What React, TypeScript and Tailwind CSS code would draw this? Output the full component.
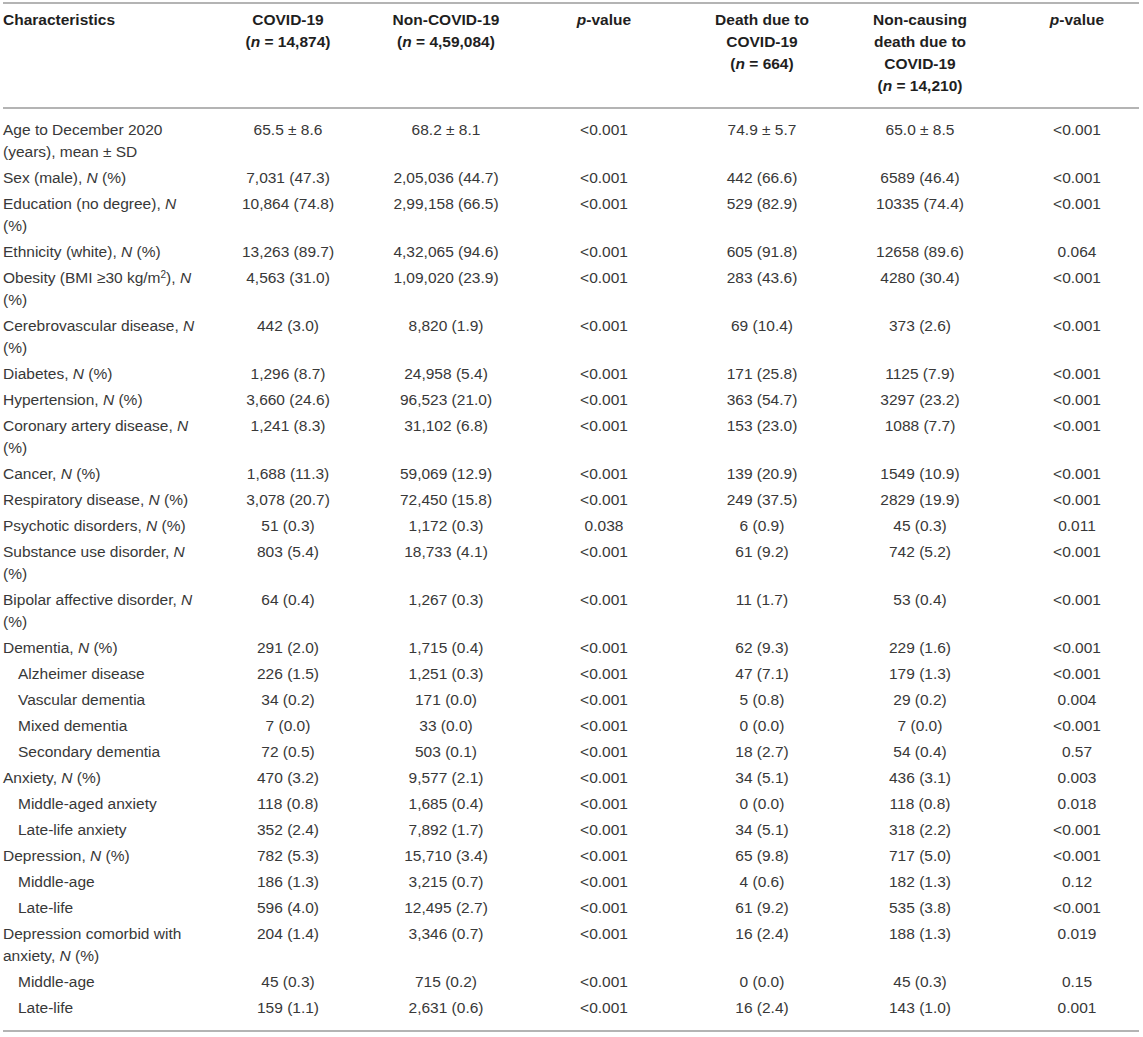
import type { ReactNode } from 'react';

const N = () => <i>N</i>;

type Row = {
  label: ReactNode;
  sub?: boolean;
  values: string[];
};

const ROWS: Row[] = [
  {
    label: (
      <>
        Age to December 2020
        <br />
        (years), mean ± SD
      </>
    ),
    values: ['65.5 ± 8.6', '68.2 ± 8.1', '<0.001', '74.9 ± 5.7', '65.0 ± 8.5', '<0.001'],
  },
  {
    label: (
      <>
        Sex (male), <N /> (%)
      </>
    ),
    values: ['7,031 (47.3)', '2,05,036 (44.7)', '<0.001', '442 (66.6)', '6589 (46.4)', '<0.001'],
  },
  {
    label: (
      <>
        Education (no degree), <N />
        <br />
        (%)
      </>
    ),
    values: ['10,864 (74.8)', '2,99,158 (66.5)', '<0.001', '529 (82.9)', '10335 (74.4)', '<0.001'],
  },
  {
    label: (
      <>
        Ethnicity (white), <N /> (%)
      </>
    ),
    values: ['13,263 (89.7)', '4,32,065 (94.6)', '<0.001', '605 (91.8)', '12658 (89.6)', '0.064'],
  },
  {
    label: (
      <>
        Obesity (BMI ≥30 kg/m<sup className="text-[10px]">2</sup>), <N />
        <br />
        (%)
      </>
    ),
    values: ['4,563 (31.0)', '1,09,020 (23.9)', '<0.001', '283 (43.6)', '4280 (30.4)', '<0.001'],
  },
  {
    label: (
      <>
        Cerebrovascular disease, <N />
        <br />
        (%)
      </>
    ),
    values: ['442 (3.0)', '8,820 (1.9)', '<0.001', '69 (10.4)', '373 (2.6)', '<0.001'],
  },
  {
    label: (
      <>
        Diabetes, <N /> (%)
      </>
    ),
    values: ['1,296 (8.7)', '24,958 (5.4)', '<0.001', '171 (25.8)', '1125 (7.9)', '<0.001'],
  },
  {
    label: (
      <>
        Hypertension, <N /> (%)
      </>
    ),
    values: ['3,660 (24.6)', '96,523 (21.0)', '<0.001', '363 (54.7)', '3297 (23.2)', '<0.001'],
  },
  {
    label: (
      <>
        Coronary artery disease, <N />
        <br />
        (%)
      </>
    ),
    values: ['1,241 (8.3)', '31,102 (6.8)', '<0.001', '153 (23.0)', '1088 (7.7)', '<0.001'],
  },
  {
    label: (
      <>
        Cancer, <N /> (%)
      </>
    ),
    values: ['1,688 (11.3)', '59,069 (12.9)', '<0.001', '139 (20.9)', '1549 (10.9)', '<0.001'],
  },
  {
    label: (
      <>
        Respiratory disease, <N /> (%)
      </>
    ),
    values: ['3,078 (20.7)', '72,450 (15.8)', '<0.001', '249 (37.5)', '2829 (19.9)', '<0.001'],
  },
  {
    label: (
      <>
        Psychotic disorders, <N /> (%)
      </>
    ),
    values: ['51 (0.3)', '1,172 (0.3)', '0.038', '6 (0.9)', '45 (0.3)', '0.011'],
  },
  {
    label: (
      <>
        Substance use disorder, <N />
        <br />
        (%)
      </>
    ),
    values: ['803 (5.4)', '18,733 (4.1)', '<0.001', '61 (9.2)', '742 (5.2)', '<0.001'],
  },
  {
    label: (
      <>
        Bipolar affective disorder, <N />
        <br />
        (%)
      </>
    ),
    values: ['64 (0.4)', '1,267 (0.3)', '<0.001', '11 (1.7)', '53 (0.4)', '<0.001'],
  },
  {
    label: (
      <>
        Dementia, <N /> (%)
      </>
    ),
    values: ['291 (2.0)', '1,715 (0.4)', '<0.001', '62 (9.3)', '229 (1.6)', '<0.001'],
  },
  { label: 'Alzheimer disease', sub: true, values: ['226 (1.5)', '1,251 (0.3)', '<0.001', '47 (7.1)', '179 (1.3)', '<0.001'] },
  { label: 'Vascular dementia', sub: true, values: ['34 (0.2)', '171 (0.0)', '<0.001', '5 (0.8)', '29 (0.2)', '0.004'] },
  { label: 'Mixed dementia', sub: true, values: ['7 (0.0)', '33 (0.0)', '<0.001', '0 (0.0)', '7 (0.0)', '<0.001'] },
  { label: 'Secondary dementia', sub: true, values: ['72 (0.5)', '503 (0.1)', '<0.001', '18 (2.7)', '54 (0.4)', '0.57'] },
  {
    label: (
      <>
        Anxiety, <N /> (%)
      </>
    ),
    values: ['470 (3.2)', '9,577 (2.1)', '<0.001', '34 (5.1)', '436 (3.1)', '0.003'],
  },
  { label: 'Middle-aged anxiety', sub: true, values: ['118 (0.8)', '1,685 (0.4)', '<0.001', '0 (0.0)', '118 (0.8)', '0.018'] },
  { label: 'Late-life anxiety', sub: true, values: ['352 (2.4)', '7,892 (1.7)', '<0.001', '34 (5.1)', '318 (2.2)', '<0.001'] },
  {
    label: (
      <>
        Depression, <N /> (%)
      </>
    ),
    values: ['782 (5.3)', '15,710 (3.4)', '<0.001', '65 (9.8)', '717 (5.0)', '<0.001'],
  },
  { label: 'Middle-age', sub: true, values: ['186 (1.3)', '3,215 (0.7)', '<0.001', '4 (0.6)', '182 (1.3)', '0.12'] },
  { label: 'Late-life', sub: true, values: ['596 (4.0)', '12,495 (2.7)', '<0.001', '61 (9.2)', '535 (3.8)', '<0.001'] },
  {
    label: (
      <>
        Depression comorbid with
        <br />
        anxiety, <N /> (%)
      </>
    ),
    values: ['204 (1.4)', '3,346 (0.7)', '<0.001', '16 (2.4)', '188 (1.3)', '0.019'],
  },
  { label: 'Middle-age', sub: true, values: ['45 (0.3)', '715 (0.2)', '<0.001', '0 (0.0)', '45 (0.3)', '0.15'] },
  { label: 'Late-life', sub: true, values: ['159 (1.1)', '2,631 (0.6)', '<0.001', '16 (2.4)', '143 (1.0)', '0.001'] },
];

const HEADERS: ReactNode[] = [
  <>
    COVID-19
    <br />(<i>n</i> = 14,874)
  </>,
  <>
    Non-COVID-19
    <br />(<i>n</i> = 4,59,084)
  </>,
  <>
    <i>p</i>-value
  </>,
  <>
    Death due to
    <br />
    COVID-19
    <br />(<i>n</i> = 664)
  </>,
  <>
    Non-causing
    <br />
    death due to
    <br />
    COVID-19
    <br />(<i>n</i> = 14,210)
  </>,
  <>
    <i>p</i>-value
  </>,
];

const headCell = 'border-t-2 border-b-2 border-[#b4b4b4] pt-[5px] pb-[10px] align-top font-bold text-[#1f1f1f]';

export default function App() {
  return (
    <div className="bg-white pt-[2px] pl-[3px] pb-[3px] font-['Liberation_Sans',Arial,sans-serif] text-[15.5px] leading-[22px] text-[#383838]">
      <table className="w-[1136px] table-fixed border-separate border-spacing-0">
        <colgroup>
          <col className="w-[206px]" />
          <col className="w-[158px]" />
          <col className="w-[158px]" />
          <col className="w-[158px]" />
          <col className="w-[158px]" />
          <col className="w-[158px]" />
          <col className="w-[140px]" />
        </colgroup>
        <thead>
          <tr>
            <th className={`${headCell} text-left`}>Characteristics</th>
            {HEADERS.map((h, i) => (
              <th key={i} className={`${headCell} text-center ${i === 5 ? 'pl-[16px]' : ''}`}>
                {h}
              </th>
            ))}
          </tr>
        </thead>
        <tbody>
          {ROWS.map((row, r) => {
            const isFirst = r === 0;
            const isLast = r === ROWS.length - 1;
            const pad = `${isFirst ? 'pt-[10px]' : 'pt-[2px]'} ${isLast ? 'pb-[11px] border-b-2 border-[#b4b4b4]' : 'pb-[2px]'}`;
            return (
              <tr key={r}>
                <td className={`${pad} align-top whitespace-nowrap ${row.sub ? 'pl-[15px]' : ''}`}>{row.label}</td>
                {row.values.map((v, i) => (
                  <td key={i} className={`${pad} align-top text-center whitespace-nowrap ${i === 5 ? 'pl-[16px]' : ''}`}>
                    {v}
                  </td>
                ))}
              </tr>
            );
          })}
        </tbody>
      </table>
    </div>
  );
}
